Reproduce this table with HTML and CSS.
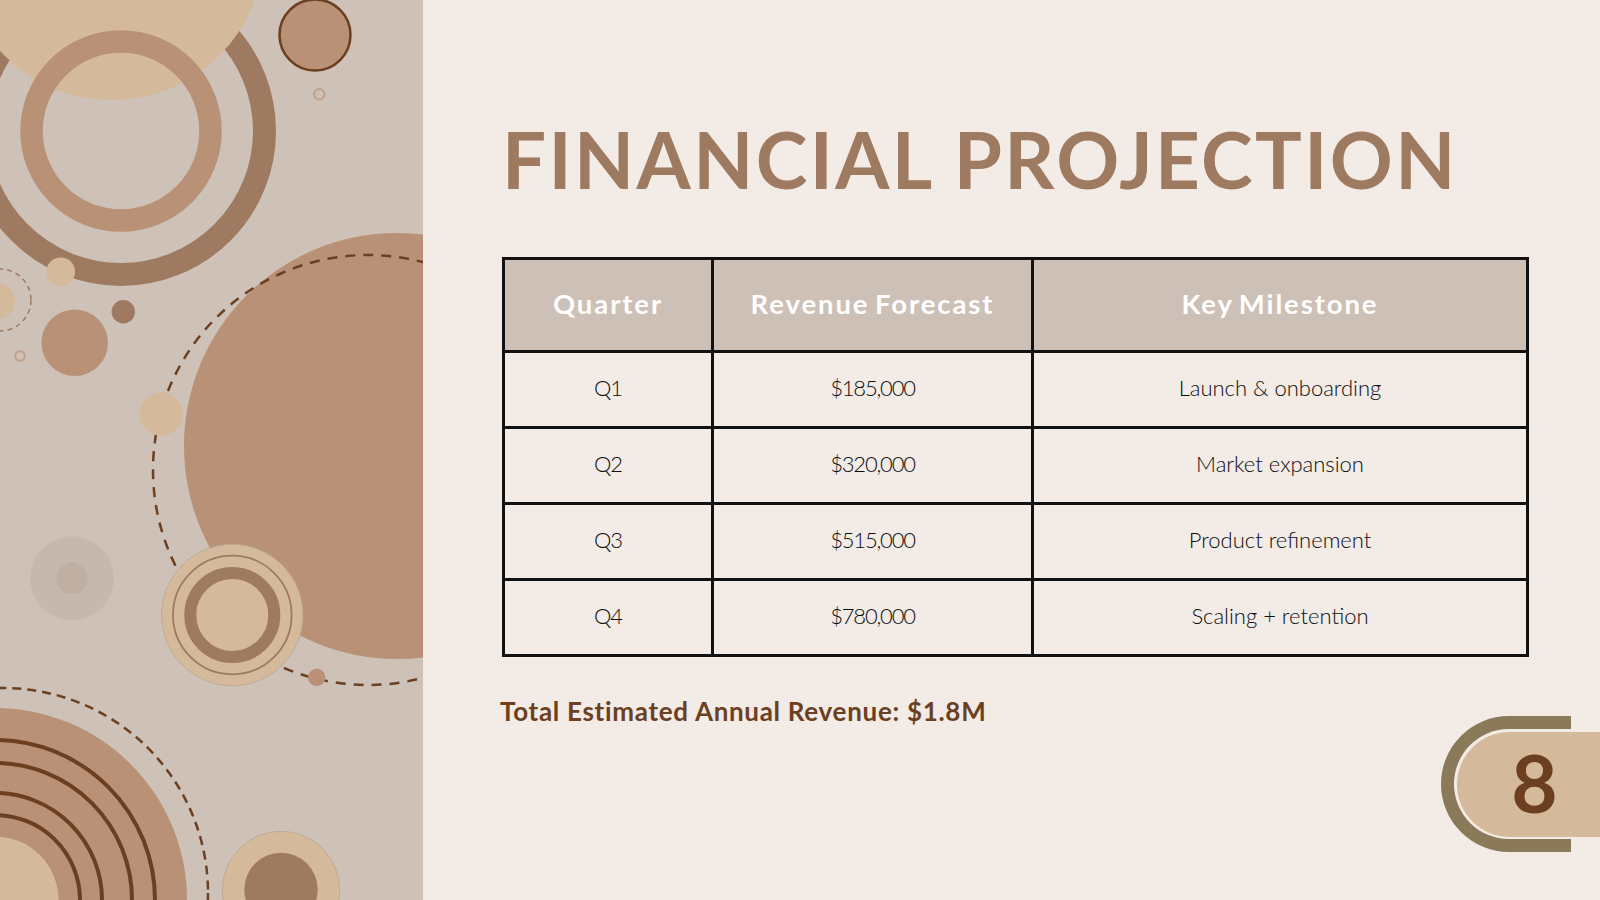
FILE: index.html
```html
<!DOCTYPE html>
<html lang="en">
<head>
<meta charset="utf-8">
<title>Financial Projection</title>
<link rel="stylesheet" href="styles.css">
</head>
<body>
<div class="slide">
  <aside class="art">
    <svg class="art-svg" viewBox="0 0 423 900" width="423" height="900" xmlns="http://www.w3.org/2000/svg">
      <circle cx="121" cy="131" r="143.5" fill="none" stroke="#9e7a60" stroke-width="23"/>
      <circle cx="112" cy="-52" r="152" fill="#d5b99b"/>
      <circle cx="121" cy="131" r="89.5" fill="none" stroke="#b89177" stroke-width="22.5"/>
      <circle cx="60.7" cy="271.7" r="14.3" fill="#d5b99b"/>
      <circle cx="315" cy="35" r="35.5" fill="#b89177" stroke="#6b3f1f" stroke-width="2.5"/>
      <circle cx="319.3" cy="94.3" r="5.2" fill="none" stroke="#c4a089" stroke-width="2"/>
      <circle cx="-3" cy="301" r="18" fill="#d5b99b"/>
      <circle cx="0" cy="300" r="31" fill="none" stroke="#9e7a60" stroke-width="1.5" stroke-dasharray="5 4"/>
      <circle cx="123.3" cy="311.7" r="11.7" fill="#9e7a60"/>
      <circle cx="74.7" cy="342.7" r="33.3" fill="#b89177"/>
      <circle cx="20" cy="356" r="4.8" fill="none" stroke="#c4a089" stroke-width="2"/>
      <circle cx="397" cy="446" r="213" fill="#b89177"/>
      <circle cx="368" cy="470" r="215" fill="none" stroke="#6b3f1f" stroke-width="2.5" stroke-dasharray="10 8"/>
      <circle cx="161" cy="414" r="21.7" fill="#d5b99b"/>
      <circle cx="316.7" cy="677.3" r="8.7" fill="#b89177"/>
      <circle cx="72" cy="578.3" r="42" fill="#c7b8ad"/>
      <circle cx="72" cy="578.3" r="15.7" fill="#bfafa3"/>
      <circle cx="232.3" cy="615" r="70.7" fill="#d5b99b" stroke="#b8a593" stroke-width="0.8"/>
      <circle cx="232.3" cy="615" r="59.3" fill="none" stroke="#9e7a60" stroke-width="1.8"/>
      <circle cx="232.3" cy="615" r="42" fill="none" stroke="#9e7a60" stroke-width="12"/>
      <circle cx="-5" cy="900" r="192" fill="#b89177"/>
      <circle cx="-5" cy="900" r="160" fill="none" stroke="#6b3f1f" stroke-width="4"/>
      <circle cx="-5" cy="900" r="137" fill="none" stroke="#6b3f1f" stroke-width="4"/>
      <circle cx="-5" cy="900" r="107" fill="none" stroke="#6b3f1f" stroke-width="4"/>
      <circle cx="-5" cy="900" r="85" fill="none" stroke="#6b3f1f" stroke-width="4"/>
      <circle cx="-5" cy="900" r="63.5" fill="#d5b99b"/>
      <circle cx="3" cy="893" r="205" fill="none" stroke="#6b3f1f" stroke-width="2.5" stroke-dasharray="9 6"/>
      <circle cx="281" cy="890" r="58.7" fill="#d5b99b" stroke="#b8a593" stroke-width="0.8"/>
      <circle cx="281" cy="889.5" r="36.7" fill="#9e7a60"/>
    </svg>
  </aside>
  <main class="content">
    <h1 class="title">FINANCIAL PROJECTION</h1>
    <table class="fin-table">
      <colgroup>
        <col class="c1"><col class="c2"><col class="c3">
      </colgroup>
      <thead>
        <tr><th>Quarter</th><th>Revenue Forecast</th><th>Key Milestone</th></tr>
      </thead>
      <tbody>
        <tr><td class="num">Q1</td><td class="num">$185,000</td><td>Launch &amp; onboarding</td></tr>
        <tr><td class="num">Q2</td><td class="num">$320,000</td><td>Market expansion</td></tr>
        <tr><td class="num">Q3</td><td class="num">$515,000</td><td>Product refinement</td></tr>
        <tr><td class="num">Q4</td><td class="num">$780,000</td><td>Scaling + retention</td></tr>
      </tbody>
    </table>
    <p class="total">Total Estimated Annual Revenue: $1.8M</p>
  </main>
  <div class="badge">
    <div class="badge-ring"></div>
    <div class="badge-gap"></div>
    <div class="badge-fill"><span class="badge-num">8</span></div>
  </div>
</div>
</body>
</html>
```

FILE: styles.css
```css
* { box-sizing: border-box; }
html, body { margin: 0; padding: 0; }
body {
  width: 1600px;
  height: 900px;
  overflow: hidden;
  background: #f2ebe6;
  font-family: "Lato", "Liberation Sans", sans-serif;
}
.slide {
  position: relative;
  display: flex;
  width: 1600px;
  height: 900px;
}
.art {
  flex: 0 0 423px;
  height: 900px;
  background: #cec1b7;
  overflow: hidden;
}
.art-svg { display: block; }
.content {
  flex: 1;
  padding: 120px 0 0 79px;
}
.title {
  margin: 0 0 59px 0;
  font-size: 78px;
  line-height: 78px;
  font-weight: 700;
  color: #9e7a60;
  letter-spacing: 2.4px;
  white-space: nowrap;
}
.fin-table {
  border-collapse: collapse;
  table-layout: fixed;
  width: 1024px;
  border: 3px solid #111;
}
.fin-table .c1 { width: 209px; }
.fin-table .c2 { width: 320px; }
.fin-table .c3 { width: 495px; }
.fin-table th,
.fin-table td {
  border: 3px solid #111;
  text-align: center;
  padding: 0;
}
.fin-table th {
  height: 93px;
  padding-bottom: 4px;
  background: #cdc0b6;
  color: #ffffff;
  font-size: 27.5px;
  font-weight: 700;
  letter-spacing: 1.9px;
  word-spacing: -3px;
}
.fin-table td {
  height: 76px;
  padding-bottom: 5px;
  color: #0d0d0d;
  font-size: 22px;
  font-weight: 300;
}
.fin-table td.num {
  letter-spacing: -1.2px;
}
.total {
  margin: 41px 0 0 -2px;
  font-size: 26px;
  line-height: 26px;
  font-weight: 700;
  color: #6b3f1f;
  letter-spacing: 0.7px;
}
.badge {
  position: absolute;
  left: 1441px;
  top: 716px;
  width: 159px;
  height: 136px;
}
.badge-ring {
  position: absolute;
  left: 0;
  top: 0;
  width: 130px;
  height: 136px;
  background: #8a7a5a;
  border-radius: 68px 0 0 68px;
}
.badge-gap {
  position: absolute;
  left: 13px;
  top: 13px;
  width: 146px;
  height: 110px;
  background: #f2ebe6;
  border-radius: 55px 0 0 55px;
}
.badge-fill {
  position: absolute;
  left: 16px;
  top: 16px;
  width: 143px;
  height: 105px;
  background: #d5b99b;
  border-radius: 52.5px 0 0 52.5px;
  display: flex;
  align-items: center;
  justify-content: center;
  padding-left: 12px;
  padding-bottom: 6px;
}
.badge-num {
  font-size: 80px;
  line-height: 1;
  font-weight: 700;
  color: #6b3f1f;
}
```
